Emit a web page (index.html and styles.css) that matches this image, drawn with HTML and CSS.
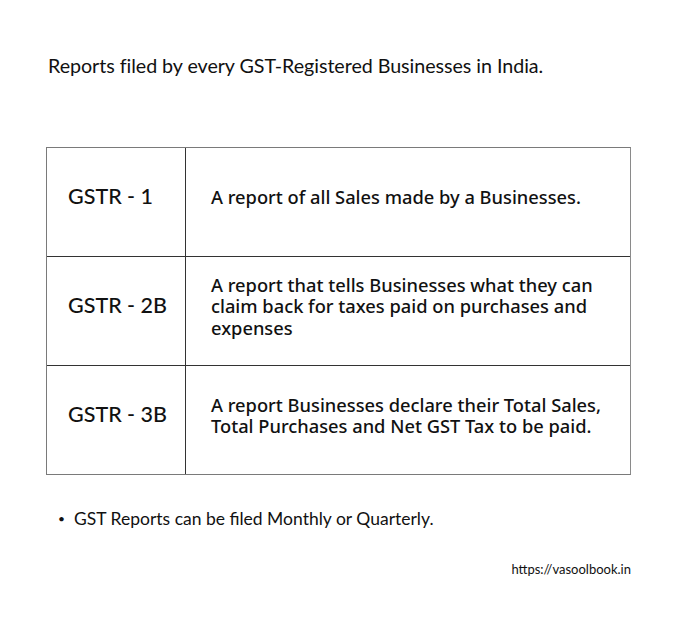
FILE: index.html
```html
<!DOCTYPE html>
<html>
<head>
<meta charset="utf-8">
<link rel="stylesheet" href="styles.css">
</head>
<body>
<div class="page">
  <h1 class="title">Reports filed by every GST-Registered Businesses in India.</h1>
  <div class="table">
    <div class="cell name">GSTR - 1</div>
    <div class="cell desc">A report of all Sales made by a Businesses.</div>
    <div class="cell name">GSTR - 2B</div>
    <div class="cell desc">A report that tells Businesses what they can claim back for taxes paid on purchases and expenses</div>
    <div class="cell name last">GSTR - 3B</div>
    <div class="cell desc last">A report Businesses declare their Total Sales, Total Purchases and Net GST Tax to be paid.</div>
  </div>
  <ul class="notes">
    <li>GST Reports can be filed Monthly or Quarterly.</li>
  </ul>
  <div class="url">https://vasoolbook.in</div>
</div>
</body>
</html>
```

FILE: styles.css
```css
html, body {
  margin: 0;
  padding: 0;
  background: #ffffff;
}
.page {
  width: 680px;
  height: 628px;
  padding: 0 49px 0 46px;
  box-sizing: border-box;
  font-family: "Lato", "Noto Sans", sans-serif;
  color: #111;
}
.title {
  margin: 0;
  padding: 53px 0 0 2px;
  font-size: 19.7px;
  font-weight: 400;
  line-height: 26px;
  letter-spacing: -0.05px;
}
.table {
  margin-top: 68px;
  display: grid;
  grid-template-columns: 139px 1fr;
  grid-template-rows: 109px 109px 108px;
  border: 1px solid #7a7a7a;
  border-right-color: #8a8a8a;
}
.cell {
  display: flex;
  align-items: center;
  border-bottom: 1px solid #333;
  padding-bottom: 13px;
  box-sizing: border-box;
}
.cell.last {
  border-bottom: none;
}
.name {
  border-right: 1px solid #333;
  padding-left: 21px;
  font-size: 21.5px;
  font-weight: 500;
}
.desc {
  padding-left: 25px;
  padding-right: 16px;
  padding-bottom: 10px;
  font-family: "Noto Sans", sans-serif;
  font-size: 18.3px;
  line-height: 21.5px;
  font-weight: 500;
}
.notes {
  margin: 33px 0 0 0;
  padding: 0 0 0 28px;
  font-size: 17.5px;
  line-height: 22px;
  list-style: none;
}
.notes li {
  position: relative;
}
.notes li::before {
  content: "•";
  position: absolute;
  left: -16px;
  font-size: 12px;
}
.url {
  margin-top: 31px;
  text-align: right;
  font-size: 13px;
}
```
